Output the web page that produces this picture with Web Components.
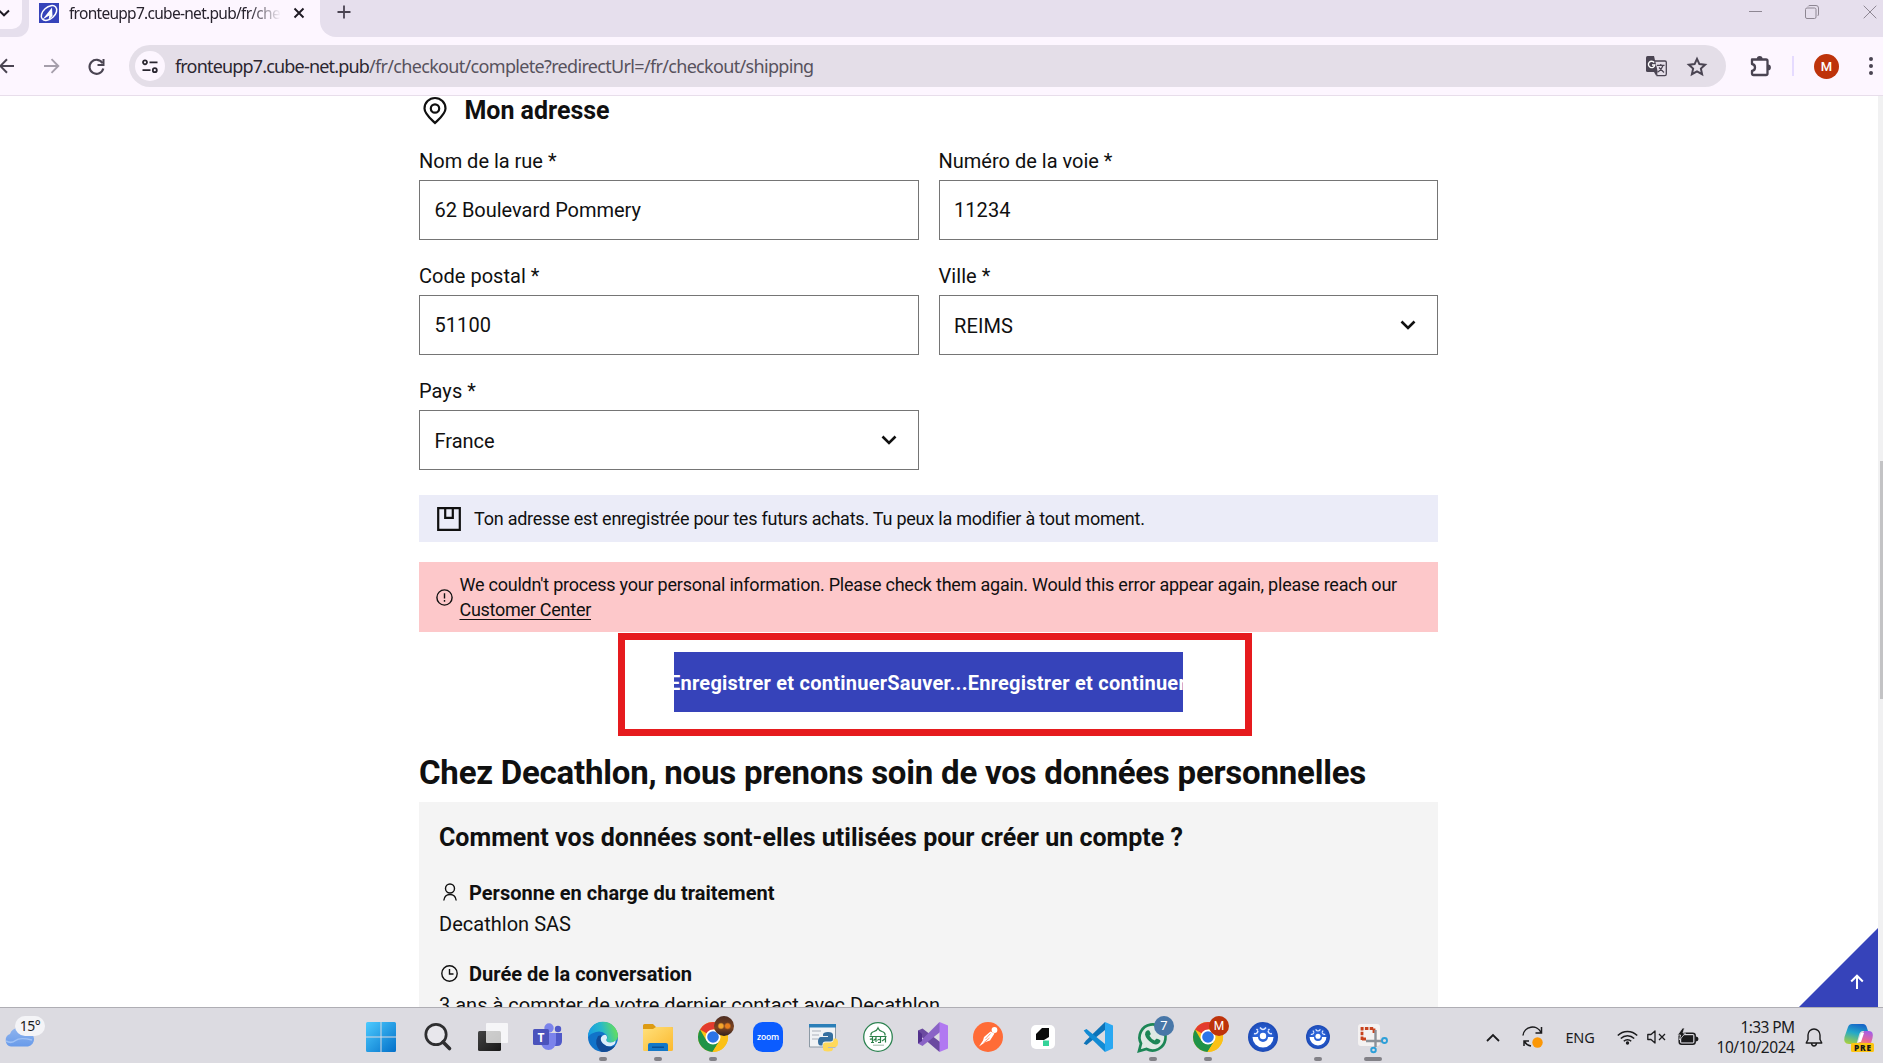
<!DOCTYPE html>
<html lang="fr">
<head>
<meta charset="utf-8">
<title>Checkout</title>
<style>
html,body{margin:0;height:100%;overflow:hidden;background:#fff}
body{font-family:Roboto,"Liberation Sans",sans-serif;color:#101010}
</style>
</head>
<body>
<desktop-screen></desktop-screen>
<script>
const define=(name,css,html,setup)=>{
  const t=document.createElement('template');
  t.innerHTML=`<style>*{box-sizing:border-box}:host{display:block;box-sizing:border-box}${css}</style>${html}`;
  customElements.define(name,class extends HTMLElement{
    connectedCallback(){
      if(this.shadowRoot)return;
      this.attachShadow({mode:'open'}).append(t.content.cloneNode(true));
      if(setup)setup(this,this.shadowRoot);
    }
  });
};

const chrome=`<svg width="30" height="30" viewBox="0 0 30 30"><circle cx="15" cy="15" r="15" fill="#fbc116"/><path d="M15 15L2 7.500A15 15 0 0 1 28 7.500L15 7.500Z" fill="#e33b2e"/><path d="M2 7.500A15 15 0 0 0 14.500 30L21.500 18.750L15 15L8.500 18.750Z" fill="#1f9347"/><path d="M15 7.500H28A15 15 0 0 1 14.500 30L21.500 18.750Z" fill="#fbc116"/><circle cx="15" cy="15" r="7.500" fill="#fff"/><circle cx="15" cy="15" r="5.800" fill="#2b74e8"/></svg>`;
const ball=s=>`<svg width="${s}" height="${s}" viewBox="0 0 30 30"><defs><radialGradient id="b"><stop offset=".5" stop-color="#2a63d8"/><stop offset="1" stop-color="#1c49b4"/></radialGradient></defs><circle cx="15" cy="15" r="15" fill="url(#b)"/><path d="M4.500 15H10a5 5 0 0 0 10 0H25.500A10.500 10.500 0 0 1 4.500 15Z" fill="#fff"/><circle cx="15" cy="14" r="3.200" fill="#fff"/><g fill="none" stroke="#dfe8ff" stroke-width="1.500"><path d="M6 11.500q3 1 4-2.500M24 11.500q-3 1-4-2.500M12 5.500q3 4 6 0M8.500 7l1.500 1.500M21.500 7L20 8.500"/></g></svg>`;
const icons={
 chevdown:`<svg width="16" height="10" viewBox="0 0 16 10"><path d="M1.500 1.500L8 8l6.500-6.500" fill="none" stroke="#101010" stroke-width="2.600"/></svg>`,
 tabchev:`<svg width="12" height="8" viewBox="0 0 12 8"><path d="M1 1.500L6 6.300l5-4.800" fill="none" stroke="#1f1b24" stroke-width="2"/></svg>`,
 favicon:`<svg width="20" height="20" viewBox="0 0 20 20"><path d="M0 0h20v20H0z" fill="#3643ba"/><ellipse cx="10" cy="10" rx="9" ry="5.800" transform="rotate(-42 10 10)" fill="none" stroke="#fff" stroke-width="1.500"/><path d="M3.500 16.500L13 4.500L13.500 13L9.500 17L10.300 12.500Z" fill="#fff"/></svg>`,
 tabclose:`<svg width="12" height="12" viewBox="0 0 12 12"><path d="M1.500 1.500l9 9m0-9l-9 9" stroke="#1f1b24" stroke-width="1.900"/></svg>`,
 plus:`<svg width="14" height="14" viewBox="0 0 14 14"><path d="M7 .5v13M.5 7h13" stroke="#4a4452" stroke-width="1.800"/></svg>`,
 min:`<svg width="14" height="14" viewBox="0 0 14 14"><path d="M0 6.500h13" stroke="#8e8793" /></svg>`,
 restore:`<svg width="14" height="14" viewBox="0 0 14 14"><g fill="none" stroke="#8e8793"><rect x=".5" y="3" width="10.500" height="10.500" rx="1.500"/><path d="M3 1.500Q3.500.5 5 .5h6q2.500 0 2.500 2.500v6q0 1.500-1 2"/></g></svg>`,
 winclose:`<svg width="14" height="14" viewBox="0 0 14 14"><path d="M.7.7l12.600 12.600m0-12.600L.7 13.300" stroke="#8e8793"/></svg>`,
 back:`<svg width="15" height="16" viewBox="0 0 15 16"><path d="M14 8H1.500M7 1.200L.3 8L7 14.800" fill="none" stroke="#4a4452" stroke-width="2"/></svg>`,
 fwd:`<svg width="16" height="16" viewBox="0 0 16 16"><path d="M-1 8h14M6.500 1.200L13.300 8l-6.800 6.800" fill="none" stroke="#a59eab" stroke-width="1.900"/></svg>`,
 reload:`<svg width="17" height="17" viewBox="0 0 17 17"><path d="M14.500 5.200A7 7 0 1 0 15.300 10.500" fill="none" stroke="#4a4452" stroke-width="2.100"/><path d="M15.500 1v6h-6" fill="none" stroke="#4a4452" stroke-width="2"/></svg>`,
 site:`<svg width="16" height="15" viewBox="0 0 16 15"><g fill="none" stroke="#2a2630" stroke-width="1.800"><circle cx="3" cy="3.300" r="2"/><path d="M7.500 3.300H15.500M.5 11.200h8"/><circle cx="12.800" cy="11.200" r="2"/></g></svg>`,
 translate:`<svg width="21" height="21" viewBox="0 0 21 21"><path d="M8 5h11q1.300 0 1.300 1.300V18q0 1.600-1.500 1.600H11z" fill="none" stroke="#4a4452" stroke-width="1.300"/><path d="M1.500 0H8l3.800 16H1.500Q0 16 0 14.500V1.500Q0 0 1.500 0Z" fill="#4a4452"/><path d="M8.200 6.500A3.200 3.200 0 1 0 8.800 9H6" fill="none" stroke="#fff" stroke-width="1.400"/><path d="M11 9.300h7.500M14.800 8v1.500M17 9.500Q15.500 14 12 16M13 11.500L18 16.500" fill="none" stroke="#4a4452" stroke-width="1.200"/><path d="M8 16h3.800L10 19.500z" fill="#4a4452"/></svg>`,
 star:`<svg width="20" height="19" viewBox="0 0 20 19"><path d="M10 1.900l2.400 5.200 5.700.6-4.200 3.900 1.200 5.600-5.100-2.900-5.100 2.900 1.200-5.600L1.900 7.700l5.700-.6z" fill="none" stroke="#4a4452" stroke-width="2"/></svg>`,
 puzzle:`<svg width="22" height="21" viewBox="0 0 22 21"><path d="M2 3.500H16q1.500 0 1.500 1.500V17.500q0 1.500-1.500 1.500H3.500Q2 19 2 17.500V15q3-.5 3-3.500T2 8Z" fill="none" stroke="#4a4452" stroke-width="2.300" stroke-linejoin="round"/><path d="M6.800 3a2.900 2.900 0 0 1 5.800 0zM18 8.500a2.900 2.900 0 0 1 0 5.800z" fill="#4a4452"/></svg>`,
 dots:`<svg width="4" height="18" viewBox="0 0 4 18"><g fill="#4a4452"><circle cx="2" cy="2" r="2"/><circle cx="2" cy="9" r="2"/><circle cx="2" cy="16" r="2"/></g></svg>`,
 pin:`<svg width="24" height="28" viewBox="0 0 24 28"><path d="M12 26C8 22 1.500 17 1.500 11.500a10.500 10.500 0 0 1 21 0C22.500 17 16 22 12 26Z" fill="none" stroke="#101010" stroke-width="2.200"/><circle cx="12" cy="11.500" r="4.200" fill="none" stroke="#101010" stroke-width="2.200"/></svg>`,
 save:`<svg width="24" height="24" viewBox="0 0 24 24"><path d="M1.200 1.200h21.600v21.600H1.200z" fill="none" stroke="#101010" stroke-width="2.200"/><path d="M8.200 1v9.800h7.600V1" fill="none" stroke="#101010" stroke-width="2.200"/></svg>`,
 alert:`<svg width="17" height="17" viewBox="0 0 17 17"><circle cx="8.500" cy="8.500" r="7.600" fill="none" stroke="#101010" stroke-width="1.400"/><path d="M8.500 4.300v5.200M8.500 11v1.700" stroke="#101010" stroke-width="1.400"/></svg>`,
 person:`<svg width="14" height="18" viewBox="0 0 14 18"><g fill="none" stroke="#101010" stroke-width="1.400"><circle cx="7" cy="5.500" r="4.500"/><path d="M.8 17.500Q1.500 11.500 7 11.500T13.200 17.500"/></g></svg>`,
 clock:`<svg width="17" height="17" viewBox="0 0 17 17"><g fill="none" stroke="#101010" stroke-width="1.400"><circle cx="8.500" cy="8.500" r="7.700"/><path d="M8.500 4v5h4"/></g></svg>`,
 up:`<svg width="14" height="16" viewBox="0 0 14 16"><path d="M7 15V2M1.200 7.500L7 1.700l5.800 5.800" fill="none" stroke="#fff" stroke-width="2"/></svg>`,
 windows:`<svg width="30" height="30" viewBox="0 0 30 30"><defs><linearGradient id="g" x1="0" y1="0" x2="1" y2="1"><stop stop-color="#4ccbff"/><stop offset="1" stop-color="#0370c9"/></linearGradient></defs><path d="M1.500 0h13v14.500H0V1.500Q0 0 1.500 0ZM15.500 0h13Q30 0 30 1.500v13H15.500ZM0 15.500h14.500V30h-13Q0 30 0 28.500ZM15.500 15.500H30v13q0 1.500-1.500 1.500h-13Z" fill="url(#g)"/></svg>`,
 search:`<svg width="28" height="28" viewBox="0 0 28 28"><circle cx="12" cy="11.500" r="10.200" fill="#e8e7ec" stroke="#2e2e30" stroke-width="2.700"/><path d="M19 19l6.500 6.500" stroke="#2e2e30" stroke-width="3.600" stroke-linecap="round"/></svg>`,
 taskview:`<svg width="30" height="30" viewBox="0 0 30 30"><defs><linearGradient id="g" x2="1" y2="1"><stop stop-color="#444"/><stop offset="1" stop-color="#171717"/></linearGradient></defs><rect y="9" width="23" height="20" rx="1.500" fill="url(#g)"/><rect x="8" y="1" width="22" height="20" rx="1" fill="#fff" opacity=".75"/></svg>`,
 teams:`<svg width="30" height="28" viewBox="0 0 30 28"><circle cx="16" cy="5" r="4.700" fill="#7b83eb"/><circle cx="25" cy="6" r="3.200" fill="#5059c9"/><path d="M21 10h8v8q0 5-5 5h-3z" fill="#5059c9"/><path d="M8 10h15v9.500a7.500 7.500 0 0 1-15 0z" fill="#7b83eb"/><rect y="6" width="16" height="16" rx="1.500" fill="#4b53bc"/><text x="8" y="18.500" font-size="12" font-weight="700" font-family="Noto Sans" text-anchor="middle" fill="#fff">T</text></svg>`,
 edge:`<svg width="30" height="30" viewBox="0 0 30 30"><defs><linearGradient id="g" x1="0" y1=".6" x2="1" y2=".4"><stop stop-color="#169be5"/><stop offset=".5" stop-color="#29b9c8"/><stop offset="1" stop-color="#69e253"/></linearGradient></defs><circle cx="15" cy="15" r="15" fill="#1173c9"/><path d="M0 15A15 15 0 0 1 30 14.500Q29 20.500 22.500 20.500 18 20.300 18.300 17.500 20.500 15 18 12.500 14 8.500 8 10 2 11.500 0 15Z" fill="url(#g)"/><path d="M10 14Q5 22 13 29.800 22 31.500 27.500 23.500 23 26 18 23.500 11 20 13.500 13Z" fill="#114b96"/><path d="M13 15.500q2-3.500 5-2.500 2 2.500.3 4.500-.3 2.800 4.200 3 3.500 0 5-2 .5 4-4 5.500-5 1-8.500-2.500-3-3-2-6z" fill="#dceefa"/></svg>`,
 explorer:`<svg width="30" height="28" viewBox="0 0 30 28"><defs><linearGradient id="g" x2="1" y2="1"><stop stop-color="#ffe07a"/><stop offset="1" stop-color="#fcb92e"/></linearGradient></defs><path d="M0 2.500Q0 1 1.500 1H10l3 3h15.500Q30 4 30 5.500V9H0Z" fill="#dd9b13"/><path d="M0 6h10l3-2h15.500Q30 4 30 5.500V26.500Q30 28 28.500 28H1.500Q0 28 0 26.500Z" fill="url(#g)"/><path d="M5 28V22q0-2 2-2H23q2 0 2 2v6Z" fill="#1378c8"/><path d="M9 23.500h12v1.500H9z" fill="#0a4f94"/></svg>`,
 chrome,
 zoom:`<svg width="30" height="30" viewBox="0 0 30 30"><rect width="30" height="30" rx="9.500" fill="#0b5cff"/><text x="15" y="17.700" font-family="Open Sans" font-size="8.500" font-weight="600" text-anchor="middle" textLength="22" fill="#fff">zoom</text></svg>`,
 python:`<svg width="30" height="30" viewBox="0 0 30 30"><path d="M1.500 2.500h26V25H1.500z" fill="#f1f3f5" stroke="#8d9aa5"/><path d="M1 2h27v3.500H1z" fill="#2b7fb8"/><path d="M4 9h9M4 13h7M4 17h6" stroke="#c2c8ce" stroke-width="1.300"/><path d="M20 10q5 0 5 3v4q0 2.500-2.500 2.500h-5q-3 0-3 3v1h-2q-2.500 0-2.500-4t2.500-4.500H20v-1h-5v-1.500q0-2.500 5-2.500Z" fill="#356f9f"/><path d="M20 29.500q-5 0-5-2.500v-4q0-2.500 2.500-2.500h5q3 0 3-3v-1h2q2.500 0 2.500 4t-2.500 4.500H20v1h5V27q0 2.500-5 2.500Z" fill="#ffd95a"/></svg>`,
 green:`<svg width="30" height="30" viewBox="0 0 30 30"><circle cx="15" cy="15" r="14.300" fill="#fff" stroke="#2e8452" stroke-width="1.300"/><path d="M8 13.500Q7.500 10.500 11 9.500Q14 8.500 15 6Q16 8.500 19 9.500Q22.500 10.500 22 13.500" fill="none" stroke="#2b8048" stroke-width="1.300"/><g fill="none" stroke="#2b8048" stroke-width="1.200"><path d="M6.500 14.500h17M9.500 15v5.500M13 15v5M17.500 15v5.500M22.500 15v5.500M7 17.500q1.500-1.500 2.500.5M10.500 18.500l2.500-2M14.500 18.500q1.500-2.500 3 0M19 19l3.500-2.500M8 20.500h3M15 20.500h3"/></g><path d="M10 23.200h11" stroke="#9cb8a5"/></svg>`,
 vs:`<svg width="30" height="30" viewBox="0 0 30 30"><path d="M0 8.500L4.500 6.500 24 21.500 21.500 30 4.500 15.500 3 17 3 20 0 21.500Z" fill="#6b4aa0"/><path d="M0 21.500L21.500 0 24 8.500 4.500 24Z" fill="#8a63c6"/><path d="M21.500 0L30 3.500V26.500L21.500 30Z" fill="#b179f1"/><path d="M0 8.500L4 12V19L0 21.500Z" fill="#52308c"/></svg>`,
 postman:`<svg width="30" height="30" viewBox="0 0 30 30"><circle cx="15" cy="15" r="15" fill="#ff6c37"/><circle cx="21.500" cy="8" r="2.900" fill="#fff"/><path d="M17.500 9.500L11 15l-1 3.500L6 24.500l6.500-4.500 4.500-1.500 4.500-7z" fill="#fff"/><path d="M17.500 11.500l-5 5.500M16.500 16l-6 5" stroke="#ff9b75"/></svg>`,
 tile:`<svg width="24" height="24" viewBox="0 0 24 24"><rect width="24" height="24" rx="5" fill="#fff"/><path d="M11 3h7v9l-5 3H5V9z" fill="#0a0a0a"/><path d="M12 15.500h6V21h-6z" fill="#34d399"/></svg>`,
 vscode:`<svg width="30" height="30" viewBox="0 0 30 30"><path d="M22 0L3 18.500 0.700 21.500 3.500 23 22 8Z" fill="#0d73b8"/><path d="M22 30L3 11.500 .7 8.500 3.500 7 22 22Z" fill="#128bd4"/><path d="M22 0L30 3.500V26.500L22 30Z" fill="#2aa8f2"/></svg>`,
 whatsapp:`<svg width="31" height="31" viewBox="0 0 31 31"><path d="M2 29L4 21.500A13 13 0 1 1 9.500 27Z" fill="#dfe9e4" stroke="#1c8656" stroke-width="2.700"/><path d="M10 8.500q2-1 2.700.7l1 2.600q0 1-1.200 2 1.800 3.500 5.200 4.700l1.600-1.700q.8-.6 3.200.9 1.700.6.300 2.900-2.700 3.200-7.300.9Q9 17.500 8 12.500 8 9.500 10 8.500Z" fill="#1c8656"/></svg>`,
 ball:ball(30), ballsmall:ball(24),
 snip:`<svg width="30" height="32" viewBox="0 0 30 32"><rect x="0" y="3" width="22" height="22" rx="3" fill="#f4f2f2"/><path d="M4 19V7.500H16" fill="none" stroke="#c8421d" stroke-width="2.800" stroke-dasharray="3.500 1.300"/><path d="M16 7.500V12M4 18h4" stroke="#c8421d" stroke-width="2.800"/><path d="M17.500 9v17M8 20h16" stroke="#8c9299" stroke-width="2.400"/><g fill="none" stroke="#2c9fd8" stroke-width="1.900"><circle cx="26.500" cy="19.500" r="2.500"/><circle cx="15.500" cy="29" r="2.300"/></g></svg>`,
 trayup:`<svg width="14" height="9" viewBox="0 0 14 9"><path d="M1 8l6-6 6 6" fill="none" stroke="#1b1b1d" stroke-width="1.800"/></svg>`,
 sync:`<svg width="22" height="22" viewBox="0 0 22 22"><g fill="none" stroke="#1b1b1d" stroke-width="1.500"><path d="M1 9.500A9.500 9.500 0 0 1 19 6.500M19.500 1v6h-6M9 20Q4.500 19 2.500 15.500M2 20v-5h5"/></g><circle cx="15.500" cy="16.500" r="5.200" fill="#fb9706"/></svg>`,
 wifi:`<svg width="21" height="16" viewBox="0 0 21 16"><g fill="none" stroke="#1b1b1d" stroke-width="1.500"><path d="M.8 6.500a13.500 13.500 0 0 1 19.400 0M3.800 9.500a9.500 9.500 0 0 1 13.400 0M6.800 12.300a5.200 5.200 0 0 1 7.400 0"/></g><circle cx="10.500" cy="14" r="1.700" fill="#1b1b1d"/></svg>`,
 mute:`<svg width="20" height="14" viewBox="0 0 20 14"><path d="M.8 4.500H4L8 1v12L4 9.500H.8Z" fill="none" stroke="#1b1b1d" stroke-width="1.300" stroke-linejoin="round"/><path d="M12 4l6 6m0-6l-6 6" stroke="#1b1b1d" stroke-width="1.300"/></svg>`,
 battery:`<svg width="21" height="17" viewBox="0 0 21 17"><rect x="1.200" y="4.200" width="16" height="11.100" rx="2.500" fill="none" stroke="#1b1b1d" stroke-width="1.500"/><rect x="3.200" y="6.200" width="12" height="7.200" fill="#1b1b1d"/><path d="M18 7.500q2.500.2 2.500 2.500T18 12.500z" fill="#1b1b1d"/><path d="M4.500 -1L-.5 6h3L1.500 11l6-7H5L6.500 -1z" fill="#1b1b1d" stroke="#dcdbe1" stroke-width=".8"/></svg>`,
 bell:`<svg width="18" height="19" viewBox="0 0 18 19"><path d="M3 11.500V7a6 6 0 0 1 12 0v4.500L16.800 15H1.200ZM6.500 15.500q.5 2.500 2.500 2.500t2.500-2.500" fill="none" stroke="#1b1b1d" stroke-width="1.400" stroke-linejoin="round"/></svg>`,
 copilot:`<svg width="30" height="29" viewBox="0 0 30 29"><defs><linearGradient id="a" x1=".6" x2=".3" y2="1"><stop stop-color="#1766c8"/><stop offset=".45" stop-color="#23a9c9"/><stop offset="1" stop-color="#a5cf42"/></linearGradient><linearGradient id="c" x1=".7" x2=".3" y2="1"><stop stop-color="#a35ee8"/><stop offset=".6" stop-color="#e86798"/><stop offset="1" stop-color="#fba14e"/></linearGradient></defs><path d="M8 1h11q3 0 4 4l1 3h-5q-3 0-4 4l-2.500 9H5q-6 0-4.500-7L4 4Q5 1 8 1Z" fill="url(#a)"/><path d="M20 8h5q5 0 3.500 7l-2 7H11l3-2q2 0 3-4Z" fill="url(#c)"/><path d="M17 10h3l-3 9h-3z" fill="#fff"/><rect x="7" y="20" width="23" height="9" rx="1.500" fill="#fdc511"/><text x="18.500" y="27.600" text-anchor="middle" font-family="Open Sans" font-weight="800" font-size="8.300" textLength="17" fill="#181818">PRE</text></svg>`,
 weather:`<svg width="31" height="21" viewBox="0 0 31 21"><defs><linearGradient id="g" x2="0" y2="1"><stop stop-color="#8fb4ee"/><stop offset="1" stop-color="#699bea"/></linearGradient></defs><path d="M7 20.500A6.500 6.500 0 0 1 6 8 9.500 9.500 0 0 1 23 6a7.300 7.300 0 0 1 1 14.500Z" fill="url(#g)"/><path d="M2 15q5.500 3 9.500-.5T28 14" fill="none" stroke="#a0c2f5" stroke-width="1.500"/></svg>`
};
define('ui-icon',':host{display:inline-flex;flex:none}svg{display:block;overflow:visible}','',(el,r)=>{
  const h=document.createElement('span');h.style.display='contents';h.innerHTML=icons[el.getAttribute('name')];r.append(h);
});

/* Single line of text tracked to a given width. */
define('text-run',':host{display:inline-block;white-space:nowrap}span{display:inline-block}:host([link]) span{text-decoration:underline 1px;text-underline-offset:3px}','<span><slot></slot></span>',(el,r)=>{
  const w=+el.getAttribute('w'),s=r.querySelector('span'),n=[...el.textContent].length;
  if(w)s.style.letterSpacing=((w-s.getBoundingClientRect().width)/n).toFixed(3)+'px';
});

define('tab-strip',`
:host{display:flex;height:37px;background:#fdf6ff;font-family:"Noto Sans","Open Sans",sans-serif}
.lead{width:29px;background:#e6dfed;border-radius:0 0 12px 0}
.pick{width:22px;height:29px;background:#fdf6ff;border-radius:0 0 10px 0;overflow:hidden}
.pick ui-icon{margin:8px 0 0 -2px}
.tab{width:291px;padding-left:10px;display:flex;height:25px;align-items:center}
.tab .t{margin-left:10px;width:211px;overflow:hidden;font-size:15.500px;line-height:24px;color:#28232e;-webkit-mask-image:linear-gradient(90deg,#000 180px,transparent 212px);mask-image:linear-gradient(90deg,#000 180px,transparent 212px)}
.tab .x{margin-left:13px}
.rest{flex:1;background:#e6dfed;border-radius:0 0 0 16px;display:flex;padding:5px 6px 0 17px}
.win{margin-left:auto;display:flex}`,
`<div class="lead"><div class="pick"><ui-icon name="tabchev"></ui-icon></div></div>
<div class="tab"><ui-icon name="favicon"></ui-icon><div class="t"><text-run w="211">fronteupp7.cube-net.pub/fr/che</text-run></div><ui-icon class="x" name="tabclose"></ui-icon></div>
<div class="rest"><ui-icon name="plus"></ui-icon><div class="win"><ui-icon name="min" style="margin-right:42px"></ui-icon><ui-icon name="restore" style="margin-right:44px"></ui-icon><ui-icon name="winclose"></ui-icon></div></div>`);

define('address-bar',`
:host{display:flex;height:59px;background:#fdf6ff;border-bottom:1px solid #e8deeb;align-items:center;padding-right:10px;font-family:"Noto Sans","Open Sans",sans-serif}
.nav{width:129px;display:flex;align-items:center;gap:30px}
.pill{width:1597px;height:42px;border-radius:21px;background:#e4dee8;display:flex;align-items:center;padding:0 19px 0 6px}
.site{width:30px;height:30px;border-radius:50%;background:#fdf6ff;display:flex;align-items:center;justify-content:center}
.url{margin-left:10px;font-size:18px;color:#2b2630;white-space:nowrap}.url .p{color:#57525d}
.a{margin-left:auto;display:flex;gap:20px;align-items:center}
.ext{margin-left:24px}
.sep{width:2px;height:20px;background:#e6dbff;margin-left:20px}
.av{width:25px;height:25px;border-radius:50%;background:#be330b;color:#fff;font:500 13px/25px Roboto;text-align:center;margin-left:20px}
.d{margin-left:auto}`,
`<div class="nav"><ui-icon name="back"></ui-icon><ui-icon name="fwd"></ui-icon><ui-icon name="reload" style="margin-left:-3px"></ui-icon></div>
<div class="pill"><div class="site"><ui-icon name="site"></ui-icon></div><div class="url"><text-run w="194">fronteupp7.cube-net.pub</text-run><text-run class="p" w="444.500">/fr/checkout/complete?redirectUrl=/fr/checkout/shipping</text-run></div><div class="a"><ui-icon name="translate"></ui-icon><ui-icon name="star"></ui-icon></div></div>
<ui-icon class="ext" name="puzzle"></ui-icon><div class="sep"></div><div class="av">M</div><ui-icon class="d" name="dots"></ui-icon>`);

define('form-field',`
:host{height:91px;font-size:20px}
.l{line-height:24px;margin-bottom:7px}
.b{height:60px;border:1px solid #757575;padding:0 21px 0 14.500px;display:flex;align-items:center;justify-content:space-between;line-height:24px}
:host([select]) ::slotted(text-run:not([slot])){position:relative;top:1px}
ui-icon{display:none}:host([select]) ui-icon{display:inline-flex}`,
`<div class="l"><slot name="label"></slot></div><div class="b"><slot></slot><ui-icon name="chevdown"></ui-icon></div>`);

define('info-banner',`:host{display:flex;height:47px;background:#ebecf8;align-items:center;padding-left:17.500px;gap:13.500px;font-size:18px}`,
`<ui-icon name="save"></ui-icon><slot></slot>`);
define('error-banner',`:host{display:flex;height:70px;background:#fdc8ca;align-items:center;padding-left:17px;gap:6.500px;font-size:18px;line-height:25px}div{display:flex;flex-direction:column;align-items:flex-start}`,
`<ui-icon name="alert"></ui-icon><div><slot></slot></div>`);
define('save-button',`:host{display:flex;justify-content:center;align-items:center;width:509px;height:60px;background:#3643ba;color:#fff;font-weight:700;font-size:20px;overflow:hidden;padding:2px 2px 0 0}`,`<slot></slot>`);
define('privacy-item',`:host{font-size:20px;line-height:30px}.h{display:flex;align-items:center;font-weight:700}.i{width:30px;display:flex}.v{margin-top:1px}`,
`<div class="h"><div class="i"><slot name="icon"></slot></div><slot name="title"></slot></div><div class="v"><slot></slot></div>`);

define('address-form',`
:host{width:1019px}
h1,h2,h3{margin:0;font-weight:700}
.top{display:flex;height:30px;align-items:center;gap:18px;padding-left:3.500px;line-height:30px;margin-bottom:23px}
.grid{display:grid;grid-template-columns:1fr 1fr;gap:24px 20px;margin-bottom:25px}
error-banner{margin:20px 0}
save-button{margin:0 auto 41px}
h2{font-size:33px;line-height:40px;margin-bottom:9px}
.panel{background:#f4f4f4;padding:21px 20px;height:300px}
h3{font-size:25px;line-height:30px;margin-bottom:25px}
privacy-item{margin-bottom:20px}
privacy-item ui-icon{margin:-2px 0 0 2px}`,
`<div class="top"><ui-icon name="pin"></ui-icon><h3 style="margin:0"><text-run w="145">Mon adresse</text-run></h3></div>
<div class="grid">
<form-field><text-run slot="label" w="137.500">Nom de la rue *</text-run><text-run w="206.500">62 Boulevard Pommery</text-run></form-field>
<form-field><text-run slot="label" w="174">Numéro de la voie *</text-run><text-run w="56.500">11234</text-run></form-field>
<form-field><text-run slot="label" w="120.500">Code postal *</text-run><text-run w="56.500">51100</text-run></form-field>
<form-field select><text-run slot="label" w="52">Ville *</text-run><text-run w="59">REIMS</text-run></form-field>
<form-field select><text-run slot="label" w="57">Pays *</text-run><text-run w="60">France</text-run></form-field>
</div>
<info-banner><text-run w="670">Ton adresse est enregistrée pour tes futurs achats. Tu peux la modifier à tout moment.</text-run></info-banner>
<error-banner><text-run w="937.500">We couldn't process your personal information. Please check them again. Would this error appear again, please reach our</text-run><text-run link w="131.500">Customer Center</text-run></error-banner>
<save-button><text-run w="517">Enregistrer et continuerSauver...Enregistrer et continuer</text-run></save-button>
<h2><text-run w="947">Chez Decathlon, nous prenons soin de vos données personnelles</text-run></h2>
<div class="panel"><h3><text-run w="744">Comment vos données sont-elles utilisées pour créer un compte ?</text-run></h3>
<privacy-item><ui-icon slot="icon" name="person" style="margin-left:3.500px"></ui-icon><text-run slot="title" w="305.500">Personne en charge du traitement</text-run><text-run w="132">Decathlon SAS</text-run></privacy-item>
<privacy-item><ui-icon slot="icon" name="clock"></ui-icon><text-run slot="title" w="223">Durée de la conversation</text-run><text-run w="501">3 ans à compter de votre dernier contact avec Decathlon</text-run></privacy-item>
</div>`);

define('page-view',`
:host{display:flex;height:911px;overflow:hidden;background:#fff;position:relative}
.body{flex:1;padding-left:419px}
.bar{width:5px;background:#f1f1f2;padding-top:365px}.thumb{width:3px;height:238px;background:#c3c3c5;margin-left:2px}
.mark{position:absolute;left:618px;top:537px;width:634px;height:103px;border:7px solid #e61b1e}
.top{position:absolute;right:5px;bottom:0;width:79px;height:79px;background:#3643ba;clip-path:polygon(100% 0,100% 100%,0 100%)}
.top ui-icon{position:absolute;left:51px;top:46px}`,
`<div class="body"><address-form></address-form></div><div class="bar"><div class="thumb"></div></div><div class="mark"></div><div class="top"><ui-icon name="up"></ui-icon></div>`);

define('task-app',`
:host{width:55px;height:55px;display:flex;align-items:center;justify-content:center;position:relative;padding-top:3px}
.run{display:none;position:absolute;bottom:2px;left:50%;width:8px;height:4px;border-radius:2px;background:#828187;transform:translateX(-50%)}
:host([run]) .run{display:block}:host([run=wide]) .run{width:18px}
::slotted(.badge){position:absolute;left:29px;top:8px;width:20px;height:20px;border-radius:50%;font:13px/20px Roboto;color:#fff;text-align:center}`,
`<slot></slot><div class="run"></div>`,(el,r)=>{
  const i=document.createElement('ui-icon');i.setAttribute('name',el.getAttribute('app'));r.insertBefore(i,r.querySelector('slot'));
});

define('task-bar',`
:host{display:flex;height:56px;border-top:1px solid #afaeb4;background:#dcdbe1;color:#1b1b1d;font-family:"Noto Sans","Open Sans",sans-serif}
.w{width:353.500px;position:relative;padding:18px 0 0 4px}
.deg{position:absolute;left:15px;top:8px;width:30px;height:20px;border-radius:10px;background:#f4f4f7;font-size:14px;line-height:20px;text-align:center;letter-spacing:-.5px}
.apps{display:flex}.apps task-app:first-child{margin-right:1.500px}
.tray{margin-left:auto;display:flex;height:55px;align-items:center;padding-top:3px;padding-right:9px}
.clk{width:87px;margin-left:9px;display:flex;flex-direction:column;align-items:flex-end;font-size:15.500px;line-height:20px;margin-right:10.500px}
.clk text-run{position:relative;top:-.5px}
.eng{font-size:14.500px;margin:0 22px 0 22px;padding-bottom:1px}`,
`<div class="w"><ui-icon name="weather"></ui-icon><div class="deg">15°</div></div>
<div class="apps">
<task-app app="windows"></task-app><task-app app="search"></task-app><task-app app="taskview"></task-app><task-app app="teams"></task-app>
<task-app app="edge" run></task-app><task-app app="explorer" run></task-app>
<task-app app="chrome" run><div class="badge" style="background:radial-gradient(circle at 35% 50%,#f5a52c 0 12%,transparent 22%),radial-gradient(circle at 68% 50%,#e87d1c 0 12%,transparent 22%),linear-gradient(#4c2c22,#7d4420 60%,#2e2020)"></div></task-app>
<task-app app="zoom"></task-app><task-app app="python"></task-app><task-app app="green"></task-app><task-app app="vs"></task-app><task-app app="postman"></task-app><task-app app="tile"></task-app><task-app app="vscode"></task-app>
<task-app app="whatsapp" run><div class="badge" style="background:#4877a8">7</div></task-app>
<task-app app="chrome" run><div class="badge" style="background:#be330b;font-size:12px">M</div></task-app>
<task-app app="ball"></task-app><task-app app="ballsmall" run></task-app><task-app app="snip" run="wide"></task-app>
</div>
<div class="tray"><ui-icon name="trayup"></ui-icon><ui-icon name="sync" style="margin-left:22px"></ui-icon><div class="eng"><text-run w="29">ENG</text-run></div><ui-icon name="wifi"></ui-icon><ui-icon name="mute" style="margin-left:9px"></ui-icon><ui-icon name="battery" style="margin-left:11px"></ui-icon><div class="clk"><text-run w="54">1:33 PM</text-run><text-run w="78">10/10/2024</text-run></div><ui-icon name="bell"></ui-icon><ui-icon name="copilot" style="margin-left:21px"></ui-icon></div>`);

define('desktop-screen',`:host{width:1883px;height:1063px;overflow:hidden}`,`<tab-strip></tab-strip><address-bar></address-bar><page-view></page-view><task-bar></task-bar>`);
</script>
</body>
</html>
